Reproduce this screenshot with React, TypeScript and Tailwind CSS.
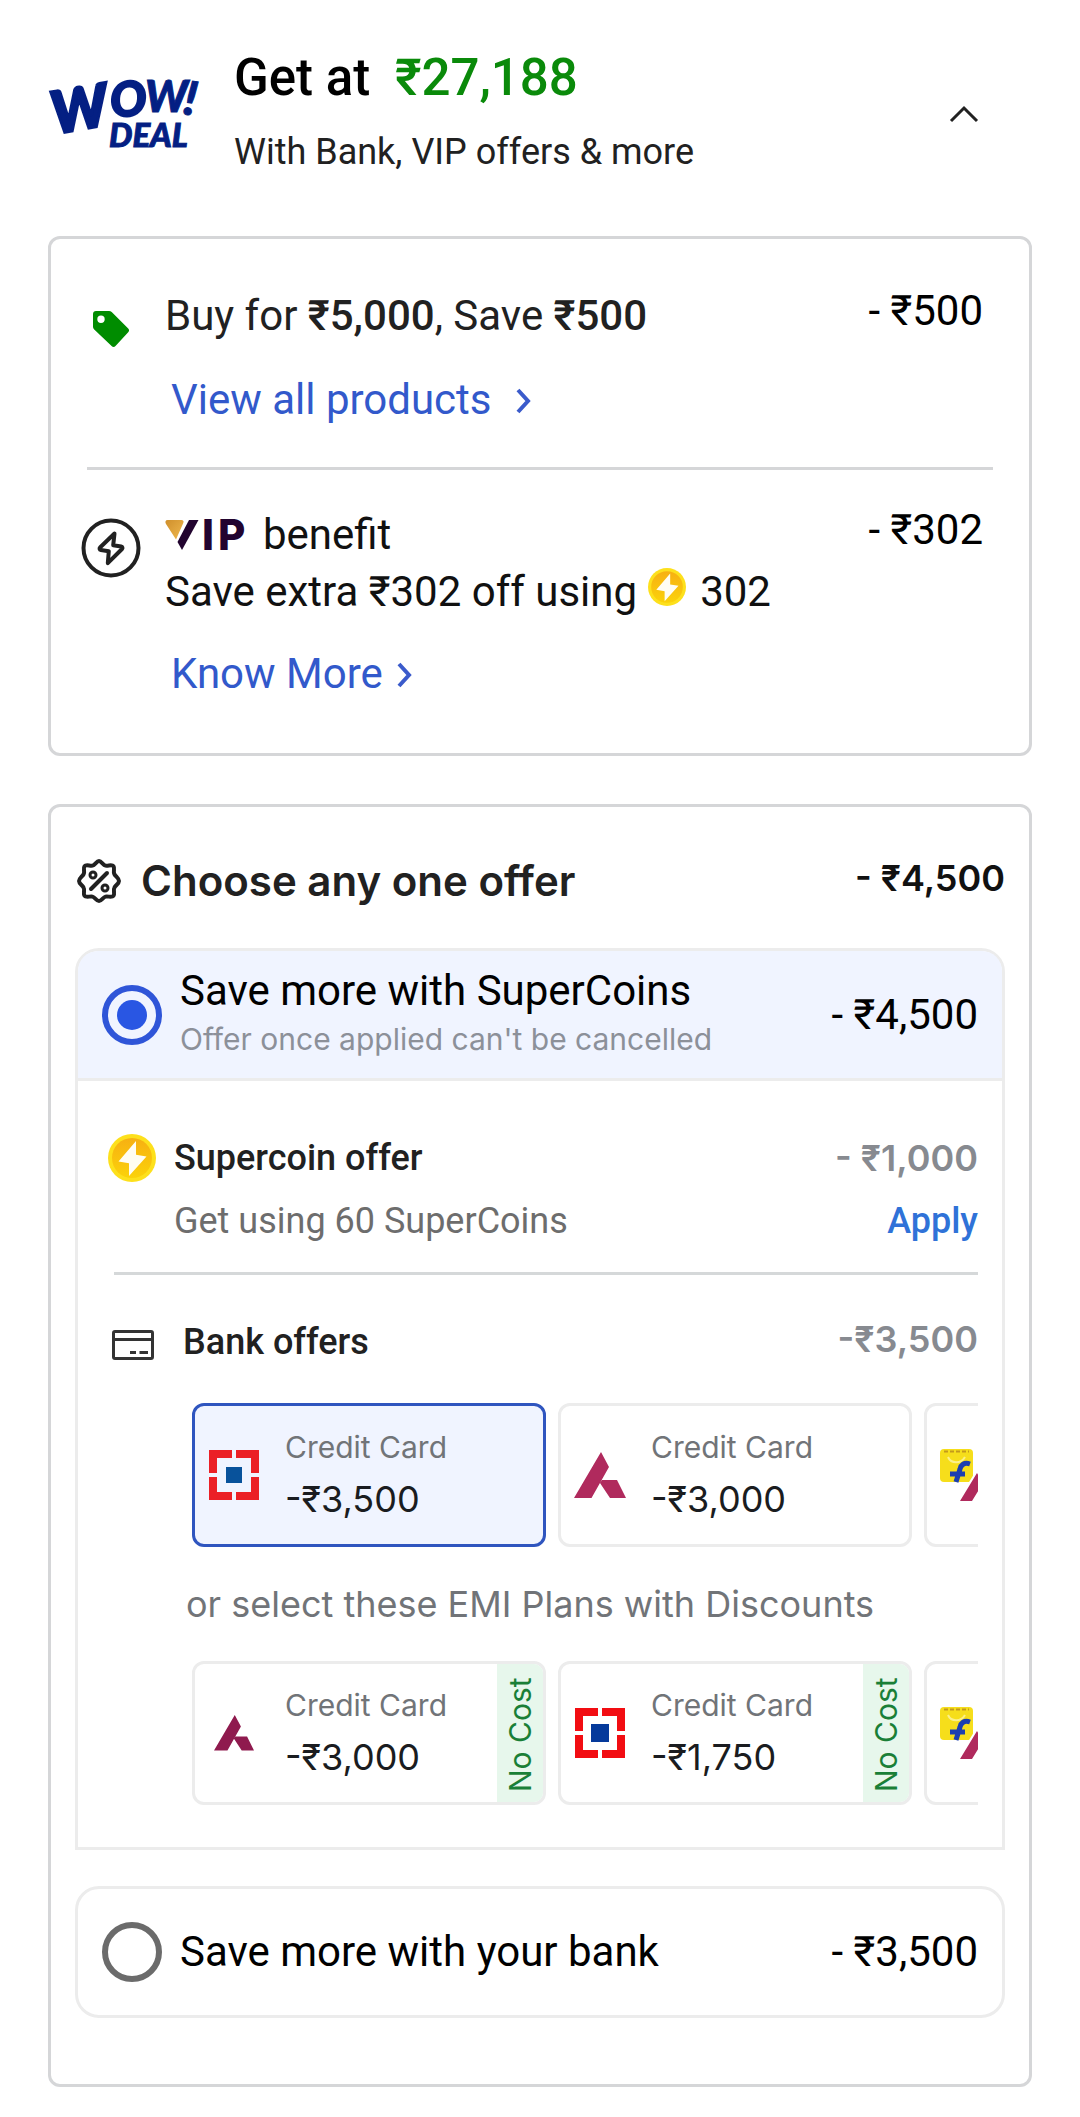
import React, { useState } from 'react'

interface CardOffer {
    id: string;
    bank: 'hdfc' | 'axis' | 'flipkart';
    amount: string;
    noCost?: boolean;
}

const bankOffers: CardOffer[] = [
    { id: 'hdfc', bank: 'hdfc', amount: '-₹3,500' },
    { id: 'axis', bank: 'axis', amount: '-₹3,000' },
    { id: 'flipkart', bank: 'flipkart', amount: '' },
];

const emiOffers: CardOffer[] = [
    { id: 'axis-emi', bank: 'axis', amount: '-₹3,000', noCost: true },
    { id: 'hdfc-emi', bank: 'hdfc', amount: '-₹1,750', noCost: true },
    { id: 'flipkart-emi', bank: 'flipkart', amount: '' },
];

const WowDealLogo = () => (
    <svg width="150" height="74" viewBox="0 0 150 74" className="shrink-0 overflow-visible" fill="#041f83" stroke="#041f83" fontFamily="Lato, sans-serif" fontWeight="900" fontStyle="italic" role="img" aria-label="Wow deal">
        <text x="7" y="59" fontSize="58" transform="rotate(-10 7 59)" strokeWidth="3">W</text>
        <text x="63" y="42" fontSize="48" transform="rotate(-3 63 42)" strokeWidth="2">O</text>
        <text x="97" y="37" fontSize="44" strokeWidth="1">W</text>
        <text x="134" y="39" fontSize="47" transform="rotate(8 134 39)" strokeWidth="1">!</text>
        <text x="61" y="72" fontSize="33" strokeWidth="1">DEAL</text>
    </svg>
);

const TagIcon = () => (
    <svg width="38" height="38" viewBox="0 0 38 38">
        <path fillRule="evenodd" fill="#008c00" d="M4 1h13c1 0 2 .4 2.700 1l16.500 16.500c1.200 1.200 1.200 2.600 0 3.800L23.500 36c-1.200 1.200-2.700 1.200-3.900 0L2.200 19.500C1.500 18.800 1 18 1 17V4c0-1.800 1.200-3 3-3Zm5 4.500a3.700 3.700 0 1 0 0 7.400 3.700 3.700 0 0 0 0-7.400Z" />
    </svg>
);

const BoltIcon = () => (
    <svg width="60" height="60" viewBox="0 0 60 60" fill="none" stroke="#212121" strokeWidth="4" strokeLinejoin="round">
        <circle cx="30" cy="30" r="27.500" />
        <path d="M33.500 15.500 19 29.500c-.8.900-.5 2.300.8 2.500l8 1.200-1 12L41 31c.9-.9.500-2.300-.8-2.500l-8-1.200Z" />
    </svg>
);

const CoinIcon = ({ className }: { className: string }) => (
    <svg viewBox="0 0 48 48" className={className}>
        <defs>
            <linearGradient id="coin" x1="0" y1="0" x2="0" y2="1">
                <stop offset="0" stopColor="#f7b012" />
                <stop offset="1" stopColor="#fbd20a" />
            </linearGradient>
        </defs>
        <circle cx="24" cy="24" r="24" fill="#fde01c" />
        <circle cx="24" cy="24" r="20" fill="url(#coin)" />
        <path fill="#fffdf2" d="M28 7 10.500 27.500l10.500 1.800L21 42l17.500-19.500-10.500-1.700Z" />
    </svg>
);

const VipLogo = () => (
    <svg width="82" height="32" viewBox="0 0 82 32" className="shrink-0 overflow-visible" role="img" aria-label="VIP">
        <defs>
            <linearGradient id="vip" x1="0" y1="0" x2="1" y2="1">
                <stop offset="0" stopColor="#cf8f2c" />
                <stop offset="1" stopColor="#f0b94f" />
            </linearGradient>
        </defs>
        <path fill="url(#vip)" d="M2.500 1h14c1.800 0 2.600 1.400 1.800 3L11 20.500 1 5C-.2 3 .6 1 2.500 1Z" />
        <path fill="#22042f" d="M24 1h9.500L17 31l-4.500-8Z" />
        <text x="37 53" y="31" fontSize="42" fontWeight="800" fontFamily="Inter, sans-serif" fill="#22042f">IP</text>
    </svg>
);

const PercentIcon = () => (
    <svg width="44" height="44" viewBox="0 0 44 44" fill="none" stroke="#212121" strokeWidth="4" strokeLinejoin="round" strokeLinecap="round" className="shrink-0">
        <path d="M22 2c2.500 0 4 4 6.500 4.600C31 7.200 35 5.200 36.500 7.200S36 12.600 37.300 15C38.500 17.400 42 19.300 42 22s-3.500 4.300-4.700 6.800c-1.300 2.500.8 6-.8 8-1.500 2-5.500.2-8 .8C26 38.200 24.500 42 22 42s-4-3.800-6.500-4.400c-2.500-.6-6.500 1.200-8-.8-1.600-2 .5-5.500-.8-8C5.500 26.300 2 24.700 2 22s3.500-4.600 4.700-7c1.300-2.400-.8-5.800.8-7.800s5.500 0 8-.6C18 6 19.500 2 22 2Z" />
        <path d="M30 14 14 30" />
        <circle cx="16" cy="16" r="3" strokeWidth="3" />
        <circle cx="28" cy="29" r="3" strokeWidth="3" />
    </svg>
);

const CreditCardIcon = () => (
    <svg width="42" height="36" viewBox="0 -6 42 36" fill="none" stroke="#333333" strokeWidth="3" className="shrink-0">
        <rect x="1.500" y="1.500" width="39" height="27" rx="1.500" />
        <path d="M2 9.500h38M18 22.500h6M27.500 22.500H36" />
    </svg>
);

const HdfcLogo = ({ emi }: { emi?: boolean }) => (
    <svg width="50" height="50" viewBox="0 0 50 50">
        <path fill={emi ? '#f20d12' : '#eb2026'} d="M0 0h23v8H8v15H0ZM27 0h23v23h-8V8H27ZM0 27h8v15h15v8H0ZM42 27h8v23H27v-8h15Z" />
        {emi ? <rect x="16" y="16" width="18" height="18" fill="#053a9b" /> : <rect x="17" y="17" width="16" height="16" fill="#08529b" />}
    </svg>
);

const AxisLogo = ({ className, color }: { className: string, color: string }) => (
    <svg viewBox="0 0 52 46" className={className} fill={color}>
        <path d="M27 0 35 15 17.500 46H0ZM28 28h15l9 18H36L26 31Z" />
    </svg>
);

const FlipkartAxisLogo = () => (
    <svg width="52" height="52" viewBox="0 0 52 52">
        <rect x="0" y="0" width="33" height="33" rx="4" fill="#f6de1b" />
        <path d="M4 2.500h25" stroke="#c39a1c" strokeWidth="2" strokeDasharray="4 2" />
        <path d="M8 8c3 7 13 7 17 0" stroke="#fbf08a" strokeWidth="2" fill="none" />
        <path d="M30 15c-6-2-9 1-10 5l-4 13M10 25h15" stroke="#1c3fb0" strokeWidth="5" fill="none" />
        <path fill="#fff" d="M36 22h16v30H17Z" />
        <path fill="#b02a5d" d="M37 24 43 34 32 52H20ZM38 40h8l5 12h-8Z" />
    </svg>
);

const Chevron = () => (
    <svg width="16" height="28" viewBox="0 -2 16 28" fill="none" stroke="#3b5bcb" strokeWidth="4">
        <path d="m2 2 10 11L2 24" />
    </svg>
);

const radioStyle = "relative flex size-15 shrink-0 appearance-none items-center justify-center rounded-full border-[6px] border-[#6b6b6b] bg-white checked:border-[#2f55d8] checked:bg-transparent checked:before:size-[30px] checked:before:rounded-full checked:before:bg-[#2956e3] checked:before:content-['']";

const OfferCard = ({ offer, selected, onSelect }: { offer: CardOffer, selected: boolean, onSelect: () => void }) => (
    <button
        type="button"
        aria-pressed={selected}
        aria-label={`${offer.bank} credit card`}
        onClick={onSelect}
        className={`flex h-36 w-[354px] shrink-0 overflow-hidden rounded-xl border-[3px] text-left font-[Inter,sans-serif] ${selected ? 'border-[#2f55bf] bg-[#f0f4ff]' : 'border-[#ececec] bg-white'}`}
    >
        <span className="flex grow items-center gap-[25px] self-stretch pl-[13px]">
            <span className="flex w-[52px] shrink-0 justify-center">
                {offer.bank === 'hdfc' && <HdfcLogo emi={offer.noCost} />}
                {offer.bank === 'axis' && (offer.noCost
                    ? <AxisLogo className="w-10" color="#8f1a4e" />
                    : <AxisLogo className="w-[52px]" color="#b02a5d" />)}
                {offer.bank === 'flipkart' && <FlipkartAxisLogo />}
            </span>
            {offer.amount && (
                <span className="flex flex-col pb-1 leading-[52px]">
                    <span className="text-[30px] text-[#717478]">Credit Card</span>
                    <span className="text-[36px] text-[#1a1c20]">{offer.amount}</span>
                </span>
            )}
        </span>
        {offer.noCost && (
            <span className="flex w-[46px] shrink-0 rotate-180 items-center justify-center self-stretch bg-[#e7f7ec] pb-1 text-[30px] text-[#1a7f37] [writing-mode:vertical-rl]">
                No Cost
            </span>
        )}
    </button>
);

const App: React.FC = () => {
    const [plan, setPlan] = useState('supercoins');
    const [card, setCard] = useState('hdfc');

    return (
        <main className="bg-white px-12 pt-12 pb-[30px] font-[Roboto,sans-serif] text-[42px] leading-[48px] text-[#212121]">
            <header className="flex items-center">
                <WowDealLogo />
                <div className="ml-9 grow">
                    <h1 className="text-[51px] leading-[60px] font-medium text-black">
                        Get at <span className="ml-3 text-[#0a8a0a]">₹27,188</span>
                    </h1>
                    <p className="mt-5 text-[36px]">With Bank, VIP offers &amp; more</p>
                </div>
                <button type="button" aria-label="Collapse offers" className="mr-11 flex size-12 items-center justify-center">
                    <svg width="30" height="22" viewBox="0 -4 30 22" fill="none" stroke="#212121" strokeWidth="3">
                        <path d="M2 16 15 3l13 13" />
                    </svg>
                </button>
            </header>

            <section className="mt-15 rounded-xl border-[3px] border-[#d5d6d8] pb-[55px]">
                <div className="flex items-start gap-6 pt-12 pr-[46px] pl-[30px]">
                    <div className="mt-3 flex size-15 items-center justify-center">
                        <TagIcon />
                    </div>
                    <div className="grow pt-[5px]">
                        <p>Buy for <b className="font-medium">₹5,000</b>, Save <b className="font-medium">₹500</b></p>
                        <a href="#products" className="mt-9 ml-1.5 flex items-center gap-6 text-[#3259cb]">
                            View all products <Chevron />
                        </a>
                    </div>
                    <p className="text-black">- ₹500</p>
                </div>
                <hr className="mx-9 mt-[43px] border-t-[3px] border-[#d5d6d8]" />
                <div className="flex items-start gap-6 pt-9 pr-[46px] pl-[30px]">
                    <div className="mt-3 shrink-0">
                        <BoltIcon />
                    </div>
                    <div className="grow pt-[5px] text-[#111111]">
                        <p className="flex items-center gap-4"><VipLogo /> benefit</p>
                        <p className="mt-[9px] flex items-center">
                            Save extra ₹302 off using <CoinIcon className="mr-3.5 ml-[11px] size-[38px] self-start" /> 302
                        </p>
                        <a href="#vip" className="mt-[34px] ml-1.5 flex items-center gap-3.5 text-[#3259cb]">
                            Know More <Chevron />
                        </a>
                    </div>
                    <p className="text-black">- ₹302</p>
                </div>
            </section>

            <section className="mt-12 rounded-xl border-[3px] border-[#d5d6d8] px-6 pt-[50px] pb-[66px]">
                <div className="flex items-start font-[Inter,sans-serif] font-semibold">
                    <div className="flex grow items-center gap-5 pl-0.5">
                        <PercentIcon />
                        <h2 className="text-[42px]">Choose any one offer</h2>
                    </div>
                    <p className="text-[36px] leading-[42px] text-[#111111]">- ₹4,500</p>
                </div>

                <div className="mt-[43px] rounded-t-3xl border-[3px] border-[#ececec]">
                    <label className="flex h-[130px] items-center gap-[18px] rounded-t-[20px] border-b-[3px] border-[#ececec] bg-[#f0f4ff] px-6">
                        <input type="radio" name="plan" checked={plan === 'supercoins'} onChange={() => setPlan('supercoins')} className={radioStyle} />
                        <span className="flex grow flex-col pb-1.5">
                            <span className="text-black">Save more with SuperCoins</span>
                            <span className="mt-1.5 font-[Inter,sans-serif] text-[30px] leading-9 text-[#8c9099]">Offer once applied can't be cancelled</span>
                        </span>
                        <span className="text-black">- ₹4,500</span>
                    </label>

                    <div className="pt-[53px] pr-6 pb-[42px] pl-[30px] text-[36px]">
                        <div className="flex gap-[18px]">
                            <CoinIcon className="size-12 shrink-0" />
                            <div className="grow">
                                <h3 className="font-medium">Supercoin offer</h3>
                                <p className="mt-[15px] text-[#6d6d6d]">Get using 60 SuperCoins</p>
                            </div>
                            <div className="flex flex-col items-end">
                                <p className="font-[Inter,sans-serif] font-semibold text-[#878a90]">- ₹1,000</p>
                                <button type="button" className="mt-[15px] font-medium text-[#2f72d8]">Apply</button>
                            </div>
                        </div>
                        <hr className="mt-[27px] ml-1.5 border-t-[3px] border-[#d5d8d9]" />

                        <div className="mt-[43px] flex items-start">
                            <div className="flex grow items-center gap-[29px] pl-1">
                                <CreditCardIcon />
                                <h3 className="font-medium">Bank offers</h3>
                            </div>
                            <p className="font-[Inter,sans-serif] leading-[42px] font-semibold text-[#878a90]">-₹3,500</p>
                        </div>
                        <div className="mt-[37px] ml-[84px] flex gap-3 overflow-hidden">
                            {bankOffers.map((offer) => (
                                <OfferCard key={offer.id} offer={offer} selected={card === offer.id} onSelect={() => setCard(offer.id)} />
                            ))}
                        </div>
                        <p className="my-[33px] ml-[78px] font-[Inter,sans-serif] text-[#717478]">or select these EMI Plans with Discounts</p>
                        <div className="ml-[84px] flex gap-3 overflow-hidden">
                            {emiOffers.map((offer) => (
                                <OfferCard key={offer.id} offer={offer} selected={card === offer.id} onSelect={() => setCard(offer.id)} />
                            ))}
                        </div>
                    </div>
                </div>

                <label className="mt-9 flex h-[132px] items-center gap-[18px] rounded-3xl border-[3px] border-[#ececec] px-6 text-black">
                    <input type="radio" name="plan" checked={plan === 'bank'} onChange={() => setPlan('bank')} className={radioStyle} />
                    <span className="grow">Save more with your bank</span>
                    <span>- ₹3,500</span>
                </label>
            </section>
        </main>
    );
};

export default App;
